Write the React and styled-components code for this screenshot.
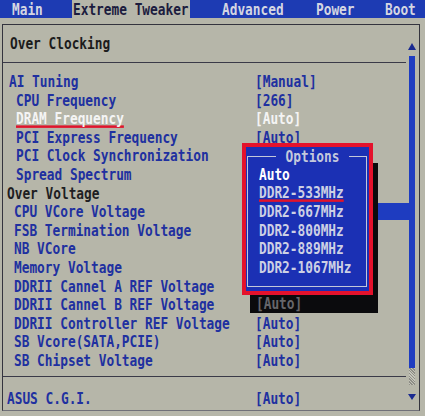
import React from "react";
import styled, { createGlobalStyle } from "styled-components";

const GlobalStyle = createGlobalStyle`
  html, body {
    margin: 0;
    padding: 0;
    background: #b6b6a9;
  }
  body {
    font-family: "DejaVu Sans Mono", "Liberation Mono", monospace;
  }
`;

const Screen = styled.div`
  position: relative;
  width: 425px;
  height: 416px;
  overflow: hidden;
  background: #b6b6a9;
`;

// bitmap-ish BIOS font: mono, stretched vertically
const Txt = styled.span`
  display: inline-block;
  font-size: 12.8px;
  font-weight: bold;
  line-height: 13px;
  white-space: pre;
  transform: scaleY(1.25);
  ${(p) =>
    p.$mark &&
    `
    text-decoration: underline;
    text-decoration-color: #e0142c;
    text-decoration-thickness: 2px;
    text-decoration-skip-ink: none;
    text-underline-offset: 1px;
  `}
`;

const TabBar = styled.div`
  display: grid;
  grid-template-columns: 72px 118px 115px 70px 1fr;
  height: 18px;
  background: #1d3bb3;
`;

const Tab = styled.div`
  display: flex;
  align-items: center;
  padding-left: ${(p) => p.$pad}px;
  background: ${(p) => (p.$active ? "#b6b6a9" : "transparent")};
  color: ${(p) => (p.$active ? "#1c1c3e" : "#d4d6e2")};
`;

const Panel = styled.div`
  margin: 6px 5px 0 2px;
  height: 385px;
  border: 1px solid #34343e;
  border-bottom-color: #707078;
  display: grid;
  grid-template-columns: 1fr 13px;
`;

const Content = styled.div`
  display: flex;
  flex-direction: column;
`;

const Title = styled.div`
  height: 37px;
  padding-left: 7px;
  display: flex;
  align-items: center;
  color: #1c1c1c;
`;

const Rule = styled.div`
  height: 1px;
  background: #3a3a48;
`;

const List = styled.div`
  padding: ${(p) => p.$pad};
`;

const Row = styled.div`
  display: grid;
  grid-template-columns: 252px 1fr;
  align-items: center;
  height: 18.6px;
  color: ${(p) =>
    p.$tone === "head" ? "#1e1e22" : p.$tone === "active" ? "#f4f4f4" : "#2030a0"};
`;

const Label = styled.div`
  padding-left: ${(p) => p.$indent}px;
`;

const ScrollCol = styled.div`
  display: flex;
  flex-direction: column;
  align-items: center;
  padding-right: 1px;
`;

const Arrow = styled.div`
  width: 0;
  height: 0;
  border-left: 4px solid transparent;
  border-right: 4px solid transparent;
  ${(p) =>
    p.$up
      ? `border-bottom: 7px solid #1a2a90; margin: 18px 0 6px;`
      : `border-top: 6px solid #1a2a90; margin: 9px 0 0;`}
`;

const Track = styled.div`
  width: 6px;
  height: 312px;
  background: #1e3cc0;
`;

const Thumb = styled.div`
  width: 6px;
  height: 17px;
  background: repeating-linear-gradient(
    45deg,
    #8e8e86 0 1px,
    #c4c4ba 1px 2px
  );
`;

const SideBlock = styled.div`
  position: absolute;
  left: 377px;
  top: 203px;
  width: 33px;
  height: 17px;
  background: #1e3cc0;
`;

const Shadow = styled.div`
  position: absolute;
  left: 250px;
  top: 163px;
  width: 128px;
  height: 150px;
  background: #0b0b0d;
  display: flex;
  align-items: flex-end;
  padding-left: 6px;
  box-sizing: border-box;
  color: #66666a;
`;

const ShadowRow = styled.div`
  height: 18.6px;
  display: flex;
  align-items: center;
`;

const Popup = styled.div`
  position: absolute;
  left: 242px;
  top: 143px;
  width: 131px;
  height: 152px;
  box-sizing: border-box;
  border: 4px solid #e4122c;
  background: #1b30b4;
  padding: 0 2px 4px 1px;
  display: flex;
`;

const Frame = styled.fieldset`
  flex: 1;
  margin: 0;
  padding: 0 0 0 11px;
  border: 1px solid #c2c6da;
  min-width: 0;
`;

const Legend = styled.legend`
  margin: 0 auto;
  padding: 0 10px;
  color: #c4c8dc;
  line-height: 18px;
  height: 18px;
`;

const Option = styled.div`
  height: 18.6px;
  display: flex;
  align-items: center;
  color: ${(p) => (p.$current ? "#ffffff" : "#cdd0e4")};
`;

const tabs = [
  { name: "Main", pad: 12 },
  { name: "Extreme Tweaker", pad: 1, active: true },
  { name: "Advanced", pad: 32 },
  { name: "Power", pad: 11 },
  { name: "Boot", pad: 10 },
];

// covered: value sits under the open Options popup / its shadow
const rows = [
  { label: "AI Tuning", value: "[Manual]", indent: 6 },
  { label: "CPU Frequency", value: "[266]", indent: 13 },
  { label: "DRAM Frequency", value: "[Auto]", indent: 13, tone: "active" },
  { label: "PCI Express Frequency", value: "[Auto]", indent: 13 },
  { label: "PCI Clock Synchronization", value: "[Auto]", indent: 13, covered: true },
  { label: "Spread Spectrum", value: "[Auto]", indent: 13, covered: true },
  { label: "Over Voltage", indent: 4, tone: "head" },
  { label: "CPU VCore Voltage", value: "[Auto]", indent: 11, covered: true },
  { label: "FSB Termination Voltage", value: "[Auto]", indent: 11, covered: true },
  { label: "NB VCore", value: "[Auto]", indent: 11, covered: true },
  { label: "Memory Voltage", value: "[Auto]", indent: 11, covered: true },
  { label: "DDRII Cannel A REF Voltage", value: "[Auto]", indent: 11, covered: true },
  { label: "DDRII Cannel B REF Voltage", value: "[Auto]", indent: 11, covered: true },
  { label: "DDRII Controller REF Voltage", value: "[Auto]", indent: 11 },
  { label: "SB Vcore(SATA,PCIE)", value: "[Auto]", indent: 11 },
  { label: "SB Chipset Voltage", value: "[Auto]", indent: 11 },
];

const options = [
  "Auto",
  "DDR2-533MHz",
  "DDR2-667MHz",
  "DDR2-800MHz",
  "DDR2-889MHz",
  "DDR2-1067MHz",
];

function App() {
  return (
    <Screen>
      <GlobalStyle />
      <TabBar>
        {tabs.map((t) => (
          <Tab key={t.name} $pad={t.pad} $active={t.active}>
            <Txt>{t.name}</Txt>
          </Tab>
        ))}
      </TabBar>

      <Panel>
        <Content>
          <Title>
            <Txt>Over Clocking</Txt>
          </Title>
          <Rule />
          <List $pad="8px 0 7px">
            {rows.map((r) => (
              <Row key={r.label} $tone={r.tone}>
                <Label $indent={r.indent}>
                  <Txt $mark={r.tone === "active"}>{r.label}</Txt>
                </Label>
                <div>{r.value && !r.covered && <Txt>{r.value}</Txt>}</div>
              </Row>
            ))}
          </List>
          <Rule />
          <List $pad="11px 0 0">
            <Row>
              <Label $indent={4}>
                <Txt>ASUS C.G.I.</Txt>
              </Label>
              <div>
                <Txt>[Auto]</Txt>
              </div>
            </Row>
          </List>
        </Content>
        <ScrollCol>
          <Arrow $up />
          <Track />
          <Thumb />
          <Arrow />
        </ScrollCol>
      </Panel>

      <SideBlock />
      <Shadow>
        <ShadowRow>
          <Txt>[Auto]</Txt>
        </ShadowRow>
      </Shadow>
      <Popup>
        <Frame>
          <Legend>
            <Txt>Options</Txt>
          </Legend>
          {options.map((o, i) => (
            <Option key={o} $current={i === 0}>
              <Txt $mark={i === 1}>{o}</Txt>
            </Option>
          ))}
        </Frame>
      </Popup>
    </Screen>
  );
}

export default App;
